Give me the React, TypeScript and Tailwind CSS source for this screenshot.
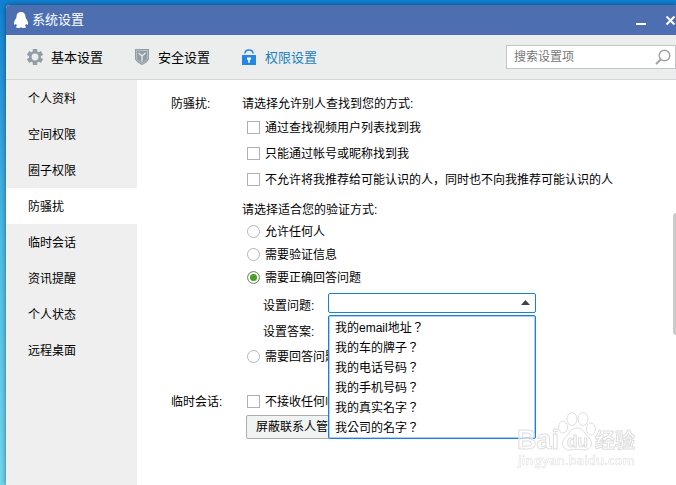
import { useState } from 'react';
import type { ReactNode } from 'react';

const SECTIONS = ['个人资料', '空间权限', '圈子权限', '防骚扰', '临时会话', '资讯提醒', '个人状态', '远程桌面'];

const FIND_OPTIONS = [
  '通过查找视频用户列表找到我',
  '只能通过帐号或昵称找到我',
  '不允许将我推荐给可能认识的人，同时也不向我推荐可能认识的人',
];

const QUESTIONS = [
  '我的email地址？',
  '我的车的牌子？',
  '我的电话号码？',
  '我的手机号码？',
  '我的真实名字？',
  '我公司的名字？',
];

function PenguinIcon() {
  return (
    <svg viewBox="0 0 14 16" className="h-4 w-3.5" fill="#fff" aria-hidden="true">
      <path d="M7 0C4.300 0 2.500 2 2.500 4.600c0 .9-.1 1.300-.5 2C1 8 0 9.700 0 11.400c0 .8.300 1.300.7 1.300.4 0 .8-.4 1.200-.9.200.8.600 1.500 1.200 2-.6.300-1 .7-1 1.200 0 .7 1 1 2.200 1 1.200 0 2.200-.3 2.700-.7.500.4 1.500.7 2.700.7 1.200 0 2.200-.3 2.200-1 0-.5-.4-.9-1-1.200.6-.5 1-1.200 1.200-2 .4.5.8.9 1.200.9.400 0 .7-.5.7-1.300 0-1.700-1-3.400-2-4.800-.4-.7-.5-1.100-.5-2C11.500 2 9.700 0 7 0Z" />
    </svg>
  );
}

function GearIcon() {
  return (
    <svg viewBox="0 0 16 16" className="size-4" aria-hidden="true">
      <g fill="#929da6">
        <rect x="5.800" y="0" width="4.400" height="16" />
        <rect x="5.800" y="0" width="4.400" height="16" transform="rotate(60 8 8)" />
        <rect x="5.800" y="0" width="4.400" height="16" transform="rotate(120 8 8)" />
      </g>
      <circle cx="8" cy="8" r="4.700" fill="#ebeeed" stroke="#929da6" strokeWidth="2.600" />
    </svg>
  );
}

function ShieldIcon() {
  return (
    <svg viewBox="0 0 14 16" className="size-4" fill="none" aria-hidden="true">
      <path d="M0 0h14v9.500c0 2.500-4 5-7 6.500-3-1.500-7-4-7-6.500Z" fill="#929da6" />
      <path d="M1.500 1.500h11v8c0 1.600-3 3.600-5.500 4.900-2.500-1.300-5.500-3.300-5.500-4.900Z" stroke="#c3c9cc" strokeWidth="0.800" />
      <path d="M3.500 4 7 7l3.500-3M7 7v5.500" stroke="#e6eaea" strokeWidth="1.300" />
    </svg>
  );
}

function LockIcon() {
  return (
    <svg viewBox="0 0 14 16" className="size-4" fill="none" aria-hidden="true">
      <path d="M2.800 4.500C3 2.200 4.700.900 7 .900s4 1.300 4.200 3.600" stroke="#2487e2" strokeWidth="1.500" />
      <rect y="6" width="14" height="10" rx="0.500" fill="#2487e2" />
      <path d="M5 8.500h4v2.300H7.800v3H6.200v-3H5Z" fill="#fff" />
    </svg>
  );
}

function SearchIcon() {
  return (
    <svg viewBox="0 0 16 16" className="size-4" fill="none" stroke="#a3a3a3" aria-hidden="true">
      <circle cx="9.500" cy="6.500" r="5.300" strokeWidth="1.500" />
      <path d="M5.700 10.500 1 15" strokeWidth="2" />
    </svg>
  );
}

function Tab({ icon, label, active = false }: { icon: ReactNode; label: string; active?: boolean }) {
  return (
    <button
      type="button"
      aria-pressed={active}
      className={`flex items-center gap-2 text-[13px] whitespace-nowrap ${active ? 'text-[#1b7fc0]' : 'text-black'}`}>
      {icon}
      <span className="pt-0.5">{label}</span>
    </button>
  );
}

function Check({ label }: { label: string }) {
  return (
    <label className="flex h-[19px] items-center gap-[5px] pl-1 whitespace-nowrap">
      <input
        type="checkbox"
        className="size-[13px] appearance-none border border-[#aeb1b3] bg-white checked:bg-[#4a9f25]"
      />
      {label}
    </label>
  );
}

type RadioProps = { label: string; value: string; current: string; onPick: (value: string) => void };

function Radio({ label, value, current, onPick }: RadioProps) {
  return (
    <label className="flex h-[19px] items-center gap-[5px] pl-1 whitespace-nowrap">
      <input
        type="radio"
        name="verify"
        checked={current === value}
        onChange={() => onPick(value)}
        className="size-[13px] appearance-none rounded-full border border-[#b3b5b6] bg-white checked:border-[#8c8c8c] checked:bg-[#4a9f25] checked:shadow-[inset_0_0_0_2px_#fff]"
      />
      {label}
    </label>
  );
}

function Watermark() {
  return (
    <div className="pointer-events-none fixed right-9 bottom-3 z-20 w-[124px]" aria-hidden="true">
      <svg viewBox="0 0 124 62" className="w-full overflow-visible" fill="#fff" fillOpacity="0.6" stroke="#dedede">
        <g fontFamily="Liberation Sans, Noto Sans CJK SC, sans-serif" fontWeight="700">
          <text x="1" y="38" fontSize="27">Bai</text>
          <path d="M61 17c6 0 8 6 12 10 5 5 2 12-5 12-5-1-9-1-14 0-7 0-10-7-5-12 4-4 6-10 12-10Z" />
          <text x="51" y="36" fontSize="17">du</text>
          <text x="79" y="37" fontSize="20">经验</text>
        </g>
        <text x="2" y="54" fontSize="13" fontFamily="Noto Sans, sans-serif" fontWeight="600" strokeWidth="0.500">
          jingyan.baidu.com
        </text>
        <ellipse cx="47" cy="16" rx="4.500" ry="6" />
        <ellipse cx="56" cy="8" rx="5" ry="6.500" />
        <ellipse cx="67" cy="8" rx="5" ry="6.500" />
        <ellipse cx="75" cy="18" rx="4.500" ry="6" />
      </svg>
    </div>
  );
}

export default function App() {
  const [section, setSection] = useState('防骚扰');
  const [verify, setVerify] = useState('answer');
  const [question, setQuestion] = useState('');
  const [open, setOpen] = useState(true);

  return (
    <div className="flex min-h-screen overflow-hidden bg-linear-to-b from-[#1180d2] via-[#4cbde6] to-[#73d6ee] pt-[5px] pl-1.5 font-['Liberation_Sans','Noto_Sans_CJK_SC',sans-serif] text-xs text-black">
      <div className="flex min-w-0 flex-1 flex-col rounded-tl-sm bg-white shadow-[0_0_5px_#00000080]">
        <header className="flex h-[30px] items-center rounded-tl-sm bg-[#4d6fb2] pl-2 text-white">
          <PenguinIcon />
          <h1 className="ml-1 text-[13px]">系统设置</h1>
          <button type="button" aria-label="最小化" className="ml-auto flex h-4 w-6 items-end justify-center pb-[3px]">
            <span className="h-0.5 w-2.5 bg-white" />
          </button>
          <button type="button" aria-label="关闭" className="ml-3">
            <svg viewBox="0 0 11 11" className="size-[11px]" stroke="#fff" strokeWidth="2" aria-hidden="true">
              <path d="m1.500 1.500 8 8m0-8-8 8" />
            </svg>
          </button>
        </header>

        <nav className="flex h-[45px] items-center border-b border-[#d4d6d5] bg-[#ebeeed] pl-[21px]">
          <div className="flex gap-[31px]">
            <Tab icon={<GearIcon />} label="基本设置" />
            <Tab icon={<ShieldIcon />} label="安全设置" />
            <Tab icon={<LockIcon />} label="权限设置" active />
          </div>
          <label className="ml-auto flex h-6 w-[170px] items-center border border-[#c2c4c5] bg-white pr-1 pl-[7px]">
            <input
              type="text"
              aria-label="搜索设置项"
              placeholder="搜索设置项"
              className="min-w-0 flex-1 outline-none placeholder:text-[#777]"
            />
            <SearchIcon />
          </label>
        </nav>

        <div className="flex flex-1">
          <aside className="w-[131px] shrink-0 bg-[#efefef]">
            {SECTIONS.map((name) => (
              <button
                key={name}
                type="button"
                onClick={() => setSection(name)}
                className={`block h-9 w-full pt-0.5 pl-[22px] text-left ${name === section ? 'bg-white' : ''}`}>
                {name}
              </button>
            ))}
          </aside>

          <main className="min-w-0 flex-1 pt-3.5 pl-[34px]">
            <section className="flex">
              <h2 className="w-[71px] shrink-0 leading-5">防骚扰:</h2>
              <div>
                <fieldset>
                  <legend className="leading-5">请选择允许别人查找到您的方式:</legend>
                  <div className="mt-1 flex flex-col gap-[7px] pl-px">
                    {FIND_OPTIONS.map((label) => (
                      <Check key={label} label={label} />
                    ))}
                  </div>
                </fieldset>

                <fieldset className="mt-[11px]">
                  <legend className="leading-5">请选择适合您的验证方式:</legend>
                  <div className="mt-0.5 flex flex-col gap-1 pl-px">
                    <Radio label="允许任何人" value="anyone" current={verify} onPick={setVerify} />
                    <Radio label="需要验证信息" value="message" current={verify} onPick={setVerify} />
                    <Radio label="需要正确回答问题" value="answer" current={verify} onPick={setVerify} />
                    <div className="mb-1 flex flex-col gap-1.5 pt-0.5 pl-5">
                      <div className="flex h-5 items-end">
                        <label htmlFor="question" className="w-[65px] leading-3.5">设置问题:</label>
                        <div className="relative">
                          <select
                            id="question"
                            value={question}
                            onMouseDown={(event) => {
                              event.preventDefault();
                              setOpen(!open);
                            }}
                            onChange={(event) => setQuestion(event.target.value)}
                            className="block h-5 w-52 appearance-none rounded-xs border border-[#1c80d8] bg-white px-1.5 outline-none">
                            <option value="" aria-label="未选择" />
                            {QUESTIONS.map((text) => (
                              <option key={text}>{text}</option>
                            ))}
                          </select>
                          <svg
                            viewBox="0 0 9 5"
                            className="pointer-events-none absolute top-[7px] right-1.5 h-[5px] w-[9px]"
                            aria-hidden="true">
                            <path d="M4.500 0 9 5H0Z" fill="#444" />
                          </svg>
                          {/* the TC face centres the full-width question mark */}
                          {open && (
                            <ul className="absolute top-[22px] left-0 z-10 w-52 rounded-xs border border-[#1c80d8] bg-white p-px font-['Liberation_Sans','Noto_Sans_CJK_TC',sans-serif] shadow-[inset_0_0_0_1px_#a9cff0]">
                              {QUESTIONS.map((text) => (
                                <li key={text}>
                                  <button
                                    type="button"
                                    onClick={() => {
                                      setQuestion(text);
                                      setOpen(false);
                                    }}
                                    className="block h-5 w-full pt-0.5 pl-[5px] text-left">
                                    {text}
                                  </button>
                                </li>
                              ))}
                            </ul>
                          )}
                        </div>
                      </div>
                      <div className="flex h-5 items-end">
                        <label htmlFor="answer" className="w-[65px] leading-3.5">设置答案:</label>
                        <input id="answer" type="text" className="h-5 w-52 border border-[#c2c4c5] px-1.5" />
                      </div>
                    </div>
                    <Radio label="需要回答问题并由我确认" value="confirm" current={verify} onPick={setVerify} />
                  </div>
                </fieldset>
              </div>
            </section>

            <section className="mt-[26px] flex">
              <h2 className="w-[72px] shrink-0 leading-5">临时会话:</h2>
              <div>
                <Check label="不接收任何临时会话消息" />
                <button
                  type="button"
                  className="mt-1 ml-[3px] h-6 rounded-xs border border-[#a9abac] bg-[#f1f2f2] px-[9px]">
                  屏蔽联系人管理
                </button>
              </div>
            </section>
          </main>
        </div>
      </div>
      <div className="fixed top-[213px] right-0 h-[122px] w-[3px] rounded-l-sm bg-[#cbcbcb]" />
      <Watermark />
    </div>
  );
}
